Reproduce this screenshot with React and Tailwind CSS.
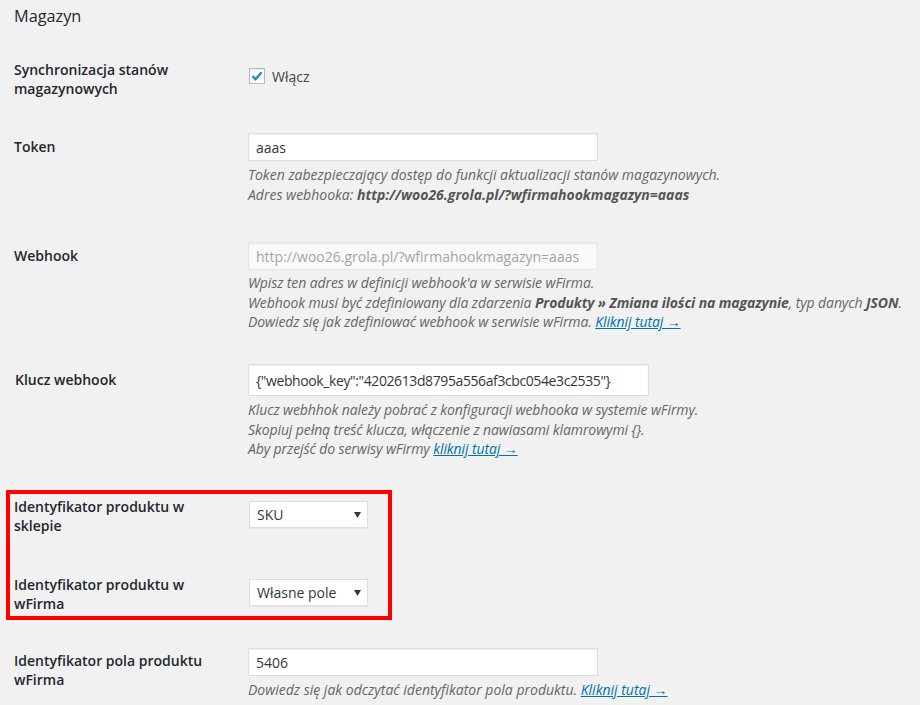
import React from "react";

const font = { fontFamily: '"Open Sans", "Noto Sans", sans-serif' };

function Label({ children, className = "" }) {
  return (
    <div className={"text-[14px] leading-[19px] font-semibold text-[#23282d] " + className}>
      {children}
    </div>
  );
}

function Desc({ children, className = "" }) {
  return (
    <div className={"text-[14px] leading-[19.5px] italic text-[#666] " + className}>{children}</div>
  );
}

function Link({ children }) {
  return <span className="text-[#0073aa] underline">{children}</span>;
}

function TextInput({ value, w = "w-[350px]", h = "h-[28px]", disabled = false, className = "" }) {
  return (
    <div
      className={
        w +
        " " +
        h +
        " flex items-center px-[7px] text-[14px] border shadow-[inset_0_1px_2px_rgba(0,0,0,0.07)] " +
        (disabled
          ? "bg-[#f9f9f9] border-[#e5e5e5] text-[#a0a5aa] "
          : "bg-white border-[#dddddd] text-[#32373c] ") +
        className
      }
    >
      {value}
    </div>
  );
}

function Select({ value }) {
  return (
    <div className="w-[119px] h-[27px] flex items-center justify-between pl-[7px] pr-[6px] bg-white border border-[#dddddd] shadow-[0_1px_1px_rgba(0,0,0,0.04)] text-[14px] text-[#32373c]">
      <span>{value}</span>
      <svg width="7" height="6" viewBox="0 0 7 6">
        <path d="M0 0 L7 0 L3.5 6 Z" fill="#32373c" />
      </svg>
    </div>
  );
}

export default function App() {
  return (
    <div className="w-[920px] h-[705px] overflow-hidden bg-[#f1f1f1]" style={font}>
      <div className="pt-[5px] pl-[14px] text-[16.3px] leading-[23px] text-[#23282d]">Magazyn</div>

      {/* Synchronizacja */}
      <div className="mt-[32px] h-[73px] flex">
        <div className="w-[248px] shrink-0 pl-[14px]">
          <Label>
            Synchronizacja stanów
            <br />
            magazynowych
          </Label>
        </div>
        <div className="pt-[8px] pl-[1px] flex items-start">
          <div className="w-[16px] h-[16px] bg-white border border-[#b4b9be] shadow-[inset_0_1px_2px_rgba(0,0,0,0.1)] flex items-center justify-center">
            <svg width="14" height="14" viewBox="0 0 14 14">
              <path d="M2.5 7.2 L5.6 10.2 L11.6 3.2" fill="none" stroke="#1e8cbe" strokeWidth="2.3" />
            </svg>
          </div>
          <span className="ml-[7px] text-[14px] leading-[19px] text-[#444] mt-[-1px]">Włącz</span>
        </div>
      </div>

      {/* Token */}
      <div className="h-[109px] flex">
        <div className="w-[248px] shrink-0 pl-[14px] pt-[4px]">
          <Label>Token</Label>
        </div>
        <div>
          <TextInput value="aaas" />
          <Desc className="mt-[4px]">
            Token zabezpieczający dostęp do funkcji aktualizacji stanów magazynowych.
            <br />
            Adres webhooka: <b className="text-[#555]">http://woo26.grola.pl/?wfirmahookmagazyn=aaas</b>
          </Desc>
        </div>
      </div>

      {/* Webhook */}
      <div className="h-[122px] flex">
        <div className="w-[248px] shrink-0 pl-[14px] pt-[4px]">
          <Label>Webhook</Label>
        </div>
        <div>
          <TextInput value="http://woo26.grola.pl/?wfirmahookmagazyn=aaas" disabled />
          <Desc className="mt-[3px] tracking-[-0.1px] whitespace-nowrap">
            Wpisz ten adres w definicji webhook'a w serwisie wFirma.
            <br />
            Webhook musi być zdefiniowany dla zdarzenia{" "}
            <b className="text-[#555]">Produkty » Zmiana ilości na magazynie</b>, typ danych{" "}
            <b className="text-[#555]">JSON</b>.
            <br />
            Dowiedz się jak zdefiniować webhook w serwisie wFirma. <Link>Kliknij tutaj →</Link>
          </Desc>
        </div>
      </div>

      {/* Klucz webhook */}
      <div className="h-[126px] flex">
        <div className="w-[248px] shrink-0 pl-[15px] pt-[6px]">
          <Label>Klucz webhook</Label>
        </div>
        <div>
          <TextInput
            value={'{"webhook_key":"4202613d8795a556af3cbc054e3c2535"}'}
            w="w-[401px]"
            h="h-[32px]"
            className="tracking-[-0.4px]"
          />
          <Desc className="mt-[4px] tracking-[-0.1px] whitespace-nowrap">
            Klucz webhhok należy pobrać z konfiguracji webhooka w systemie wFirmy.
            <br />
            Skopiuj pełną treść klucza, włączenie z nawiasami klamrowymi {"{}"}.
            <br />
            Aby przejść do serwisy wFirmy <Link>kliknij tutaj →</Link>
          </Desc>
        </div>
      </div>

      {/* Red box */}
      <div className="ml-[6px] w-[386px] h-[130px] border-4 border-[#ff0000]">
        <div className="h-[80px] flex">
          <div className="w-[239px] shrink-0 pl-[4px] pt-[3px]">
            <Label>
              Identyfikator produktu w
              <br />
              sklepie
            </Label>
          </div>
          <div className="pt-[7px]">
            <Select value="SKU" />
          </div>
        </div>
        <div className="h-[42px] flex">
          <div className="w-[239px] shrink-0 pl-[4px] pt-[1px]">
            <Label>
              Identyfikator produktu w
              <br />
              wFirma
            </Label>
          </div>
          <div className="pt-[5px]">
            <Select value="Własne pole" />
          </div>
        </div>
      </div>

      {/* Identyfikator pola */}
      <div className="mt-[28px] flex">
        <div className="w-[248px] shrink-0 pl-[14px] pt-[3px]">
          <Label>
            Identyfikator pola produktu
            <br />
            wFirma
          </Label>
        </div>
        <div>
          <TextInput value="5406" />
          <Desc className="mt-[4px] whitespace-nowrap">
            Dowiedz się jak odczytać identyfikator pola produktu. <Link>Kliknij tutaj →</Link>
          </Desc>
        </div>
      </div>
    </div>
  );
}
